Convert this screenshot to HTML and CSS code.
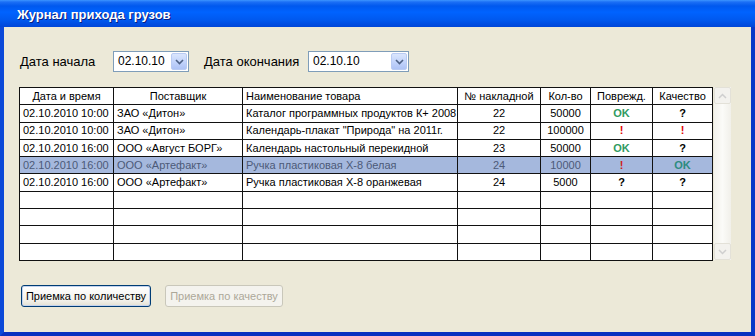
FILE: index.html
```html
<!DOCTYPE html>
<html lang="ru">
<head>
<meta charset="utf-8">
<title>Журнал прихода грузов</title>
<link rel="stylesheet" href="styles.css">
</head>
<body>
<div class="window">
  <div class="titlebar"><span class="title">Журнал прихода грузов</span></div>
  <div class="content">
    <div class="dates">
      <span class="label l1">Дата начала</span>
      <div class="combo c1"><span class="val">02.10.10</span><span class="dd"><svg width="9" height="6" viewBox="0 0 9 6"><path d="M1 1 L4.5 4.5 L8 1" fill="none" stroke="#4d6185" stroke-width="1.6"/></svg></span></div>
      <span class="label l2">Дата окончания</span>
      <div class="combo c2"><span class="val">02.10.10</span><span class="dd"><svg width="9" height="6" viewBox="0 0 9 6"><path d="M1 1 L4.5 4.5 L8 1" fill="none" stroke="#4d6185" stroke-width="1.6"/></svg></span></div>
    </div>
    <div class="grid-wrap">
      <table class="grid">
        <colgroup>
          <col class="w1"><col class="w2"><col class="w3"><col class="w4"><col class="w5"><col class="w6"><col class="w7">
        </colgroup>
        <thead>
          <tr><th>Дата и время</th><th>Поставщик</th><th class="left">Наименование товара</th><th>№ накладной</th><th>Кол-во</th><th>Поврежд.</th><th>Качество</th></tr>
        </thead>
        <tbody>
          <tr><td>02.10.2010 10:00</td><td>ЗАО «Дитон»</td><td>Каталог программных продуктов К+ 2008</td><td class="c">22</td><td class="c">50000</td><td class="c ok">OK</td><td class="c q">?</td></tr>
          <tr><td>02.10.2010 10:00</td><td>ЗАО «Дитон»</td><td>Календарь-плакат "Природа" на 2011г.</td><td class="c">22</td><td class="c">100000</td><td class="c ex">!</td><td class="c ex">!</td></tr>
          <tr><td>02.10.2010 16:00</td><td>ООО «Август БОРГ»</td><td>Календарь настольный перекидной</td><td class="c">23</td><td class="c">50000</td><td class="c ok">OK</td><td class="c q">?</td></tr>
          <tr class="sel"><td>02.10.2010 16:00</td><td>ООО «Артефакт»</td><td>Ручка пластиковая Х-8 белая</td><td class="c">24</td><td class="c">10000</td><td class="c ex">!</td><td class="c ok">OK</td></tr>
          <tr><td>02.10.2010 16:00</td><td>ООО «Артефакт»</td><td>Ручка пластиковая Х-8 оранжевая</td><td class="c">24</td><td class="c">5000</td><td class="c q">?</td><td class="c q">?</td></tr>
          <tr><td></td><td></td><td></td><td></td><td></td><td></td><td></td></tr>
          <tr><td></td><td></td><td></td><td></td><td></td><td></td><td></td></tr>
          <tr><td></td><td></td><td></td><td></td><td></td><td></td><td></td></tr>
          <tr><td></td><td></td><td></td><td></td><td></td><td></td><td></td></tr>
        </tbody>
      </table>
      <div class="scrollbar">
        <span class="sbtn"><svg width="9" height="6" viewBox="0 0 9 6"><path d="M1 5 L4.5 1.5 L8 5" fill="none" stroke="#cfcfcf" stroke-width="1.5"/></svg></span>
        <span class="track"></span>
        <span class="sbtn"><svg width="9" height="6" viewBox="0 0 9 6"><path d="M1 1 L4.5 4.5 L8 1" fill="none" stroke="#cfcfcf" stroke-width="1.5"/></svg></span>
      </div>
    </div>
    <div class="buttons">
      <button class="btn">Приемка по количеству</button>
      <button class="btn disabled">Приемка по качеству</button>
    </div>
  </div>
</div>
</body>
</html>
```
FILE: styles.css
```css
* { box-sizing: border-box; }
html, body { margin: 0; padding: 0; background: #ece9d8; }
body { font-family: "Liberation Sans", Arial, sans-serif; }

.window {
  width: 755px;
  height: 336px;
  display: flex;
  flex-direction: column;
  background: #0a4be0;
}

.titlebar {
  height: 27px;
  flex: none;
  background: linear-gradient(#3d95ff 0, #1c6ff5 2px, #0058ee 6px, #0063ff 45%, #0058ee 75%, #0046d8 100%);
  padding-left: 17px;
  display: flex;
  align-items: center;
}
.title {
  color: #fff;
  font-weight: bold;
  font-size: 13px;
  text-shadow: 1px 1px 0 #0a1e80;
  padding-top: 2px;
}

.content {
  flex: 1;
  background: #ece9d8;
  border-left: 4px solid #0b49d8;
  border-right: 4px solid #0838c8;
  border-bottom: 4px solid #0831c0;
  padding: 24px 0 0 15px;
  display: flex;
  flex-direction: column;
}

.dates {
  display: flex;
  align-items: center;
  height: 21px;
  font-size: 13px;
  color: #000;
}
.label.l1 { margin-left: 1px; width: 93px; }
.label.l2 { margin-left: 15px; width: 104px; }
.combo {
  height: 21px;
  background: #fff;
  border: 1px solid #7f9db9;
  display: flex;
  align-items: center;
  justify-content: space-between;
  padding: 1px 1px 1px 4px;
  font-size: 12px;
}
.combo.c1 { width: 76px; }
.combo.c2 { width: 101px; }
.combo .val { padding-bottom: 2px; }
.dd {
  width: 16px;
  height: 17px;
  border-radius: 2px;
  border: 1px solid #b9cbf3;
  background: linear-gradient(#dbe6fd, #bfd1fa 60%, #aec3f5);
  display: flex;
  align-items: center;
  justify-content: center;
}

.grid-wrap {
  display: flex;
  margin-top: 15px;
  align-items: flex-start;
}
.grid {
  border-collapse: collapse;
  table-layout: fixed;
  width: 693px;
  background: #fff;
  font-size: 11px;
  color: #000;
}
.grid col.w1 { width: 94px; }
.grid col.w2 { width: 129px; }
.grid col.w3 { width: 215px; }
.grid col.w4 { width: 83px; }
.grid col.w5 { width: 50px; }
.grid col.w6 { width: 62px; }
.grid col.w7 { width: 60px; }
.grid tr { height: 17.3px; }
.grid th, .grid td {
  border: 1px solid #111;
  padding: 0 3px;
  white-space: nowrap;
  overflow: hidden;
  line-height: 15px;
  font-weight: normal;
}
.grid th { text-align: center; }
.grid th.left { text-align: left; }
.grid td.c { text-align: center; }
.grid .ok { color: #2f9a62; font-weight: bold; }
.grid .ex { color: #e00000; font-weight: bold; }
.grid .q { font-weight: bold; }
.grid tr.sel td { background: #a5b8dd; color: #4c5a78; }
.grid tr.sel td.ok { color: #2d8b80; }
.grid tr.sel td.ex { color: #d02020; }

.scrollbar {
  width: 17px;
  height: 173px;
  margin-left: 1px;
  display: flex;
  flex-direction: column;
  background: #f6f5f0;
}
.sbtn {
  height: 17px;
  flex: none;
  border: 1px solid #e3e1d8;
  border-radius: 2px;
  background: #f3f2ee;
  display: flex;
  align-items: center;
  justify-content: center;
}
.track { flex: 1; background: linear-gradient(90deg, #f3f2ec, #fbfbf8 50%, #f1f0ea); }

.buttons {
  display: flex;
  margin-top: 24px;
  margin-left: 2px;
}
.btn {
  height: 22px;
  font-family: "Liberation Sans", Arial, sans-serif;
  font-size: 11px;
  color: #000;
  border: 1px solid #003c74;
  border-radius: 3px;
  background: linear-gradient(#ffffff, #f3f2ec 70%, #e3e0d2);
  padding: 0;
  white-space: nowrap;
  width: 130px;
  margin-right: 14px;
  box-shadow: inset 0 0 0 1px #c3d3ef;
}
.btn.disabled {
  width: 118px;
  color: #aca899;
  border-color: #c9c7ba;
  background: #f4f3ee;
  box-shadow: none;
}
```
